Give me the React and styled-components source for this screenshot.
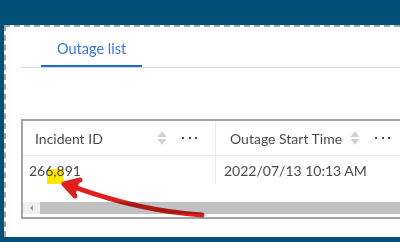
import React from "react";
import styled, { createGlobalStyle } from "styled-components";

const GlobalStyle = createGlobalStyle`
  html, body {
    margin: 0;
    padding: 0;
    overflow: hidden;
  }
  body {
    font-family: "Lato", "Liberation Sans", sans-serif;
  }
`;

const Page = styled.div`
  position: relative;
  width: 400px;
  height: 242px;
  box-sizing: border-box;
  background: #024f77;
  padding: 25px 0 5px 4px;
  overflow: hidden;
`;

const Panel = styled.div`
  height: 100%;
  box-sizing: border-box;
  background: #fff;
  border-top: 2px dashed #9aa8b2;
  border-left: 2px dashed #9aa8b2;
  padding-left: 15px;
  display: flex;
  flex-direction: column;
`;

const TabStrip = styled.div`
  display: flex;
  padding-left: 20px;
  border-bottom: 1px solid #dcdcdc;
`;

const Tab = styled.div`
  padding: 12px 16px 6px;
  font-size: 14.5px;
  line-height: 20px;
  color: ${(p) => (p.$active ? "#3a74df" : "#555")};
  border-bottom: 2px solid ${(p) => (p.$active ? "#1a6ae0" : "transparent")};
`;

const Table = styled.div`
  margin-top: 51px;
  width: 600px;
  height: 100px;
  box-sizing: border-box;
  border: 2px solid #a3a3a3;
  border-right: none;
  display: flex;
  flex-direction: column;
`;

const Row = styled.div`
  display: grid;
  grid-template-columns: 193px 193px 1fr;
  border-bottom: ${(p) => (p.$head ? "1px solid #ececec" : "none")};
`;

const HeadCell = styled.div`
  height: 34px;
  display: flex;
  align-items: center;
  padding-left: ${(p) => p.$pad}px;
  border-right: 1px solid #ececec;
  font-size: 14px;
  color: #4a4a4a;
`;

const HeadLabel = styled.span`
  flex: 1;
  white-space: nowrap;
`;

const Sort = styled.svg`
  width: 10px;
  height: 16px;
  margin-right: 15px;
`;

const More = styled.span`
  width: 15px;
  margin-right: 18px;
  display: flex;
  justify-content: space-between;
  & i {
    width: 2px;
    height: 2px;
    background: #4a4a4a;
  }
`;

const DataCell = styled.div`
  height: 28px;
  display: flex;
  align-items: center;
  padding-left: ${(p) => p.$pad}px;
  border-right: 1px solid #ececec;
  font-size: 14px;
  color: #4a4a4a;
  white-space: nowrap;
`;

const Filler = styled.div`
  flex: 1;
`;

const Scrollbar = styled.div`
  height: 12px;
  display: flex;
  background: #f0f0f0;
  margin-bottom: 3px;
`;

const ScrollArrow = styled.div`
  width: 17px;
  display: flex;
  align-items: center;
  justify-content: center;
  &::before {
    content: "";
    border-top: 3px solid transparent;
    border-bottom: 3px solid transparent;
    border-right: 3px solid #a0a0a0;
  }
`;

const Thumb = styled.div`
  flex: 1;
  background: #c1c1c1;
`;

const Markup = styled.svg`
  position: absolute;
  left: 0;
  top: 0;
  width: 400px;
  height: 242px;
  mix-blend-mode: multiply;
  pointer-events: none;
`;

const Dots = () => (
  <More>
    <i />
    <i />
    <i />
  </More>
);

const SortIcon = () => (
  <Sort viewBox="0 0 10 16">
    <path d="M5 1 L9.5 7 H0.5 Z" fill="#d2d2d2" />
    <path d="M5 15 L9.5 9 H0.5 Z" fill="#d2d2d2" />
  </Sort>
);

export default function App() {
  return (
    <>
      <GlobalStyle />
      <Page>
        <Panel>
          <TabStrip>
            <Tab $active>Outage list</Tab>
          </TabStrip>
          <Table>
            <Row $head>
              <HeadCell $pad={12}>
                <HeadLabel>Incident ID</HeadLabel>
                <SortIcon />
                <Dots />
              </HeadCell>
              <HeadCell $pad={14}>
                <HeadLabel>Outage Start Time</HeadLabel>
                <SortIcon />
                <Dots />
              </HeadCell>
              <HeadCell $pad={14} />
            </Row>
            <Row>
              <DataCell $pad={6}>266,891</DataCell>
              <DataCell $pad={8}>2022/07/13 10:13 AM</DataCell>
              <DataCell $pad={8} />
            </Row>
            <Filler />
            <Scrollbar>
              <ScrollArrow />
              <Thumb />
            </Scrollbar>
          </Table>
        </Panel>
        <Markup viewBox="0 0 400 242">
          <rect x="47" y="169" width="16" height="15" fill="#ffe800" />
          <path
            d="M202 215 Q140 211 74 187"
            stroke="#e0201c"
            strokeWidth="5"
            fill="none"
            strokeLinecap="round"
          />
          <path
            d="M80 180 L64 184 L75 196"
            stroke="#e0201c"
            strokeWidth="5"
            fill="#e0201c"
            strokeLinecap="round"
            strokeLinejoin="round"
          />
        </Markup>
      </Page>
    </>
  );
}
